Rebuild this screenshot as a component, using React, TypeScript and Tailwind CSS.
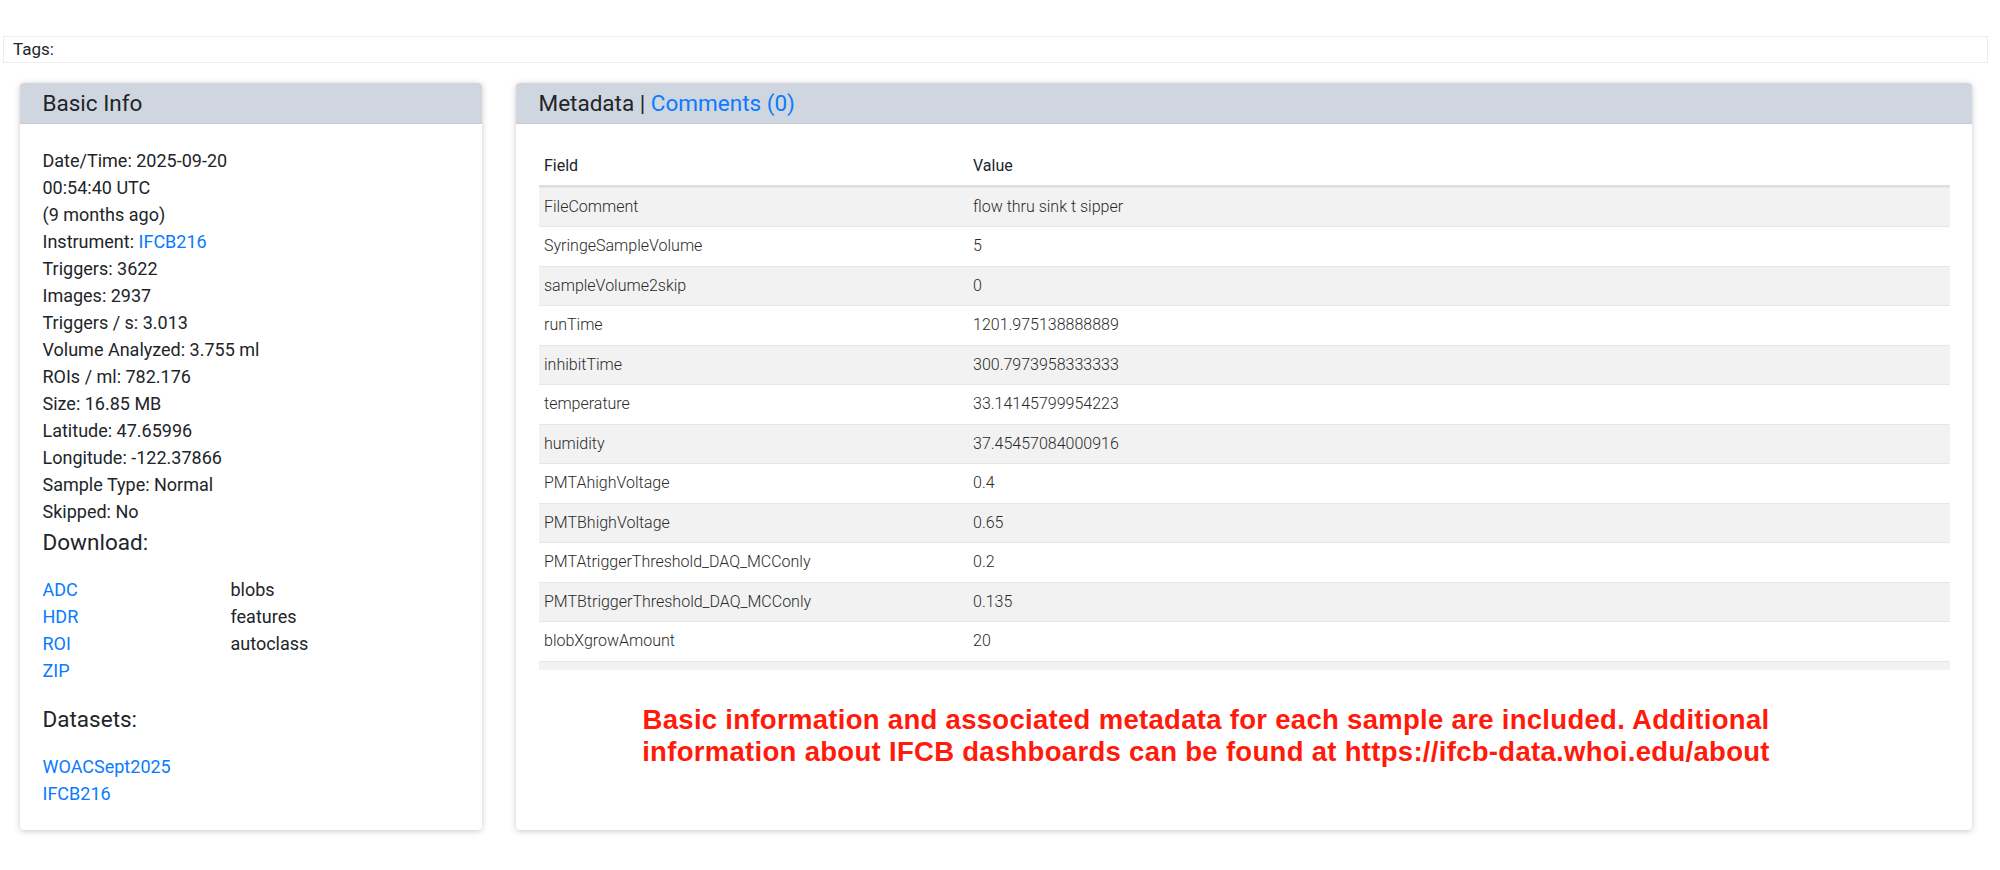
import React from "react";

const lines: React.ReactNode[] = [
  "Date/Time: 2025-09-20",
  "00:54:40 UTC",
  "(9 months ago)",
  <>
    Instrument: <a className="text-[#0a7bff]">IFCB216</a>
  </>,
  "Triggers: 3622",
  "Images: 2937",
  "Triggers / s: 3.013",
  "Volume Analyzed: 3.755 ml",
  "ROIs / ml: 782.176",
  "Size: 16.85 MB",
  "Latitude: 47.65996",
  "Longitude: -122.37866",
  "Sample Type: Normal",
  "Skipped: No",
];

const downloads: [string, string][] = [
  ["ADC", "blobs"],
  ["HDR", "features"],
  ["ROI", "autoclass"],
  ["ZIP", ""],
];

const metadata: [string, string][] = [
  ["FileComment", "flow thru sink t sipper"],
  ["SyringeSampleVolume", "5"],
  ["sampleVolume2skip", "0"],
  ["runTime", "1201.975138888889"],
  ["inhibitTime", "300.7973958333333"],
  ["temperature", "33.14145799954223"],
  ["humidity", "37.45457084000916"],
  ["PMTAhighVoltage", "0.4"],
  ["PMTBhighVoltage", "0.65"],
  ["PMTAtriggerThreshold_DAQ_MCConly", "0.2"],
  ["PMTBtriggerThreshold_DAQ_MCConly", "0.135"],
  ["blobXgrowAmount", "20"],
  ["blobYgrowAmount", "5"],
];

function CardHeader({ children }: { children: React.ReactNode }) {
  return (
    <div className="h-[41px] bg-[#d0d6e0] border-b border-[#c6ccd7] px-[22.5px] flex items-center text-[22.5px] leading-[27px] text-[#212529] rounded-t-[4px]">
      {children}
    </div>
  );
}

export default function App() {
  return (
    <div
      className="w-[2000px] h-[870px] bg-white text-[#212529] pt-[36px]"
      style={{ fontFamily: "Roboto, 'Noto Sans', sans-serif" }}
    >
      {/* tag strip */}
      <div className="ml-[3px] w-[1985px] h-[27px] border border-[#ececec] flex items-center pl-[9px] text-[17px]">
        Tags:
      </div>

      <div className="flex items-stretch gap-[34px] pl-[20px] pr-[28px] mt-[20px]">
        {/* Basic Info card */}
        <div className="w-[462px] shrink-0 rounded-[4px] bg-white shadow-[0_1px_6px_rgba(0,0,0,0.22)]">
          <CardHeader>Basic Info</CardHeader>
          <div className="p-[22.5px] text-[18px] leading-[27px]">
            {lines.map((l, i) => (
              <div key={i}>{l}</div>
            ))}
            <div className="mt-[4px] mb-[20px] text-[22.5px] leading-[27px]">Download:</div>
            <div className="grid grid-cols-[188px_1fr]">
              {downloads.map(([a, b]) => (
                <React.Fragment key={a}>
                  <a className="text-[#0a7bff]">{a}</a>
                  <span>{b}</span>
                </React.Fragment>
              ))}
            </div>
            <div className="mt-[22.5px] mb-[20px] text-[22.5px] leading-[27px]">Datasets:</div>
            <div className="flex flex-col">
              <a className="text-[#0a7bff]">WOACSept2025</a>
              <a className="text-[#0a7bff]">IFCB216</a>
            </div>
          </div>
        </div>

        {/* Metadata card */}
        <div className="flex-1 rounded-[4px] bg-white shadow-[0_1px_6px_rgba(0,0,0,0.22)]">
          <CardHeader>
            <span>
              Metadata | <a className="text-[#0a7bff]">Comments (0)</a>
            </span>
          </CardHeader>
          <div className="p-[22.5px]">
            <div className="h-[523px] overflow-hidden text-[16px]">
              <div className="grid grid-cols-[429px_1fr] h-[40px] border-b-2 border-[#dcdde0] items-center text-[#212529]">
                <div className="pl-[5.5px]">Field</div>
                <div className="pl-[5.5px]">Value</div>
              </div>
              {metadata.map(([f, v], i) => (
                <div
                  key={f}
                  className={
                    "grid grid-cols-[429px_1fr] h-[39.5px] items-center font-light text-[#2a2a2a] border-t border-[#e6e6e8] first:border-t-0 " +
                    (i % 2 === 0 ? "bg-[#f2f2f2]" : "bg-white")
                  }
                >
                  <div className="pl-[5.5px]">{f}</div>
                  <div className="pl-[5.5px]">{v}</div>
                </div>
              ))}
            </div>
            <div
              className="mt-[34px] pr-[76px] text-center text-[27.5px] leading-[32.7px] tracking-[0.3px] font-bold text-[#ff1a0a] whitespace-nowrap"
              style={{ fontFamily: "'Liberation Sans', Arial, sans-serif" }}
            >
              Basic information and associated metadata for each sample are included. Additional
              <br />
              information about IFCB dashboards can be found at https://ifcb-data.whoi.edu/about
            </div>
          </div>
        </div>
      </div>
    </div>
  );
}
